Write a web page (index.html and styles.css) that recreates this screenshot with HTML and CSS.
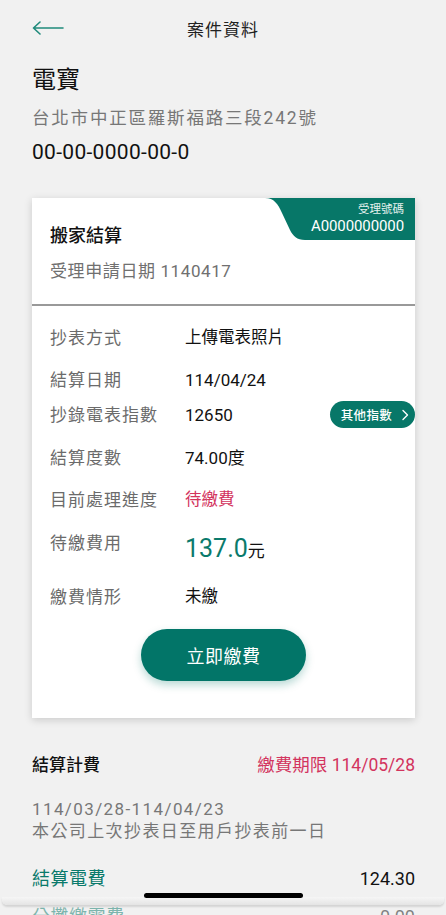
FILE: index.html
```html
<!DOCTYPE html>
<html lang="zh-Hant">
<head>
<meta charset="utf-8">
<meta name="viewport" content="width=446">
<title>案件資料</title>
<link rel="stylesheet" href="styles.css">
</head>
<body>
<header class="topbar">
  <span class="back">
    <svg width="32" height="14" viewBox="0 0 32 14" fill="none" stroke="#1f8a7b" stroke-width="1.6" stroke-linecap="round" stroke-linejoin="round"><path d="M31 7H1.5M8 1L1.5 7L8 13"/></svg>
  </span>
  <h1 class="title">案件資料</h1>
  <span></span>
</header>

<section class="info">
  <div class="name">電寶</div>
  <div class="addr">台北市中正區羅斯福路三段242號</div>
  <div class="acct">00-00-0000-00-0</div>
</section>

<section class="card">
  <div class="badge">
    <svg class="badge-bg" width="150" height="42" viewBox="0 0 150 42"><path d="M0 0H150V42H40C32 42 28 38 25 32L17 15C13 6 9 0 0 0Z" fill="#077768"/></svg>
    <div class="badge-text">
      <span class="badge-label">受理號碼</span>
      <span class="badge-no">A0000000000</span>
    </div>
  </div>
  <div class="card-head">
    <div class="card-title">搬家結算</div>
    <div class="card-sub">受理申請日期 1140417</div>
  </div>
  <div class="card-body">
    <div class="row"><span class="lbl">抄表方式</span><span class="val">上傳電表照片</span></div>
    <div class="row"><span class="lbl">結算日期</span><span class="val num">114/04/24</span></div>
    <div class="row row-idx"><span class="lbl">抄錄電表指數</span><span class="val num">12650</span>
      <span class="pill">其他指數<svg width="8" height="12" viewBox="0 0 8 12" fill="none" stroke="#fff" stroke-width="1.4" stroke-linecap="round" stroke-linejoin="round"><path d="M2 1.5L6.5 6L2 10.5"/></svg></span>
    </div>
    <div class="row row-wide"><span class="lbl">結算度數</span><span class="val num">74.00度</span></div>
    <div class="row"><span class="lbl">目前處理進度</span><span class="val red">待繳費</span></div>
    <div class="row row-money"><span class="lbl">待繳費用</span><span class="val"><span class="money">137.0</span><span class="yuan">元</span></span></div>
    <div class="row row-last"><span class="lbl">繳費情形</span><span class="val">未繳</span></div>
    <button class="pay">立即繳費</button>
  </div>
</section>

<section class="bill">
  <div class="bill-head">
    <span class="bill-title">結算計費</span>
    <span class="deadline">繳費期限 114/05/28</span>
  </div>
  <div class="period">
    <div>114/03/28-114/04/23</div>
    <div>本公司上次抄表日至用戶抄表前一日</div>
  </div>
  <div class="fee">
    <span class="fee-name">結算電費</span>
    <span class="fee-amt">124.30</span>
  </div>
  <div class="fee fee-cut">
    <span class="fee-name">分攤繳電費</span>
    <span class="fee-amt">0.00</span>
  </div>
</section>

<div class="bottom-sheet"></div>
<div class="home-bar"></div>
</body>
</html>
```

FILE: styles.css
```css
* { box-sizing: border-box; }

html, body {
  margin: 0;
  padding: 0;
}

body {
  width: 446px;
  height: 915px;
  overflow: hidden;
  background: #f1f1f1;
  font-family: Roboto, "Noto Sans CJK TC", sans-serif;
  color: #1a1a1a;
}

.topbar {
  height: 56px;
  display: grid;
  grid-template-columns: 1fr auto 1fr;
  align-items: center;
  padding: 0 32px;
}

.back {
  display: flex;
  align-items: center;
}

.title {
  margin: 0;
  font-size: 17px;
  font-weight: 400;
  letter-spacing: 1px;
  color: #222;
}

.info {
  padding: 0 32px;
}

.name {
  margin-top: 8px;
  font-size: 24px;
  line-height: 32px;
  font-weight: 400;
  color: #111;
}

.addr {
  margin-top: 9px;
  font-size: 17.5px;
  line-height: 26px;
  letter-spacing: 1.8px;
  color: #777;
}

.acct {
  margin-top: 7px;
  font-size: 21px;
  line-height: 28px;
  letter-spacing: 0.3px;
  color: #111;
}

.card {
  position: relative;
  margin: 32px 31px 0 32px;
  background: #fff;
  box-shadow: 0 2px 8px rgba(0, 0, 0, 0.16);
}

.badge {
  position: absolute;
  top: 0;
  right: 0;
  width: 150px;
  height: 42px;
}

.badge-bg {
  position: absolute;
  top: 0;
  left: 0;
}

.badge-text {
  position: relative;
  display: flex;
  flex-direction: column;
  align-items: flex-end;
  padding: 4px 11px 0 0;
  color: #fff;
}

.badge-label {
  font-size: 11.5px;
  line-height: 15px;
  color: #e4f1ee;
}

.badge-no {
  font-size: 15px;
  line-height: 19px;
  letter-spacing: -0.1px;
}

.card-head {
  padding: 27px 18px 22px;
  border-bottom: 2px solid #999;
}

.card-title {
  font-size: 18px;
  line-height: 22px;
  font-weight: 500;
  color: #111;
}

.card-sub {
  margin-top: 13px;
  font-size: 17px;
  line-height: 22px;
  letter-spacing: 0.6px;
  color: #707070;
}

.card-body {
  display: flex;
  flex-direction: column;
  padding: 19px 0 37px 18px;
}

.row {
  display: flex;
  align-items: center;
  min-height: 26px;
  margin-top: 16px;
}

.row:first-child {
  margin-top: 0;
}

.row-idx {
  margin-top: 8px;
}

.row-wide {
  margin-top: 17px;
}

.row-money {
  align-items: flex-start;
  margin-top: 17px;
}

.row-last {
  margin-top: 15px;
}

.lbl {
  width: 135px;
  flex: none;
  font-size: 17px;
  line-height: 26px;
  letter-spacing: 1px;
  color: #6b6b6b;
}

.val {
  font-size: 16.5px;
  line-height: 26px;
  color: #111;
}

.val.num {
  font-size: 17px;
}

.red {
  color: #d3345e;
}

.row-money .val {
  margin-top: 2px;
  line-height: 34px;
}

.money {
  font-size: 25px;
  color: #0a7a6b;
}

.yuan {
  font-size: 17px;
  color: #111;
}

.pill {
  margin-left: auto;
  display: flex;
  align-items: center;
  gap: 9px;
  height: 27px;
  padding: 0 6px 0 11px;
  border-radius: 14px;
  background: #077768;
  color: #fff;
  font-size: 12.5px;
  font-weight: 500;
  letter-spacing: 0.3px;
}

.pay {
  align-self: center;
  margin: 19px 18px 0 0;
  width: 165px;
  height: 52px;
  border: none;
  border-radius: 26px;
  background: #027568;
  color: #fff;
  font-family: Roboto, "Noto Sans CJK TC", sans-serif;
  font-size: 18px;
  letter-spacing: 0.5px;
  box-shadow: 0 4px 9px rgba(2, 117, 104, 0.28);
}

.bill {
  padding: 0 31px 0 32px;
}

.bill-head {
  margin-top: 35px;
  display: flex;
  justify-content: space-between;
  align-items: center;
  line-height: 24px;
}

.bill-title {
  font-size: 17px;
  font-weight: 500;
  color: #111;
}

.deadline {
  font-size: 17.5px;
  color: #d3345e;
}

.period {
  margin-top: 21px;
  font-size: 17px;
  line-height: 22px;
  letter-spacing: 1.4px;
  color: #777;
}

.fee {
  margin-top: 25px;
  display: flex;
  justify-content: space-between;
  align-items: center;
  line-height: 24px;
  font-size: 18px;
}

.fee-name {
  color: #0a7a6b;
  letter-spacing: 0.5px;
}

.fee-amt {
  color: #111;
}

.fee-cut {
  margin-top: 14px;
  opacity: 0.5;
}

.bottom-sheet {
  position: fixed;
  left: 2px;
  right: 2px;
  top: 897px;
  height: 8px;
  border-radius: 0 0 5px 5px;
  background: linear-gradient(#f6f6f6, #e4e4e4);
  box-shadow: 0 2px 2px rgba(0, 0, 0, 0.12);
}

.home-bar {
  position: fixed;
  left: 144px;
  top: 893px;
  width: 159px;
  height: 5px;
  border-radius: 3px;
  background: #000;
}
```
